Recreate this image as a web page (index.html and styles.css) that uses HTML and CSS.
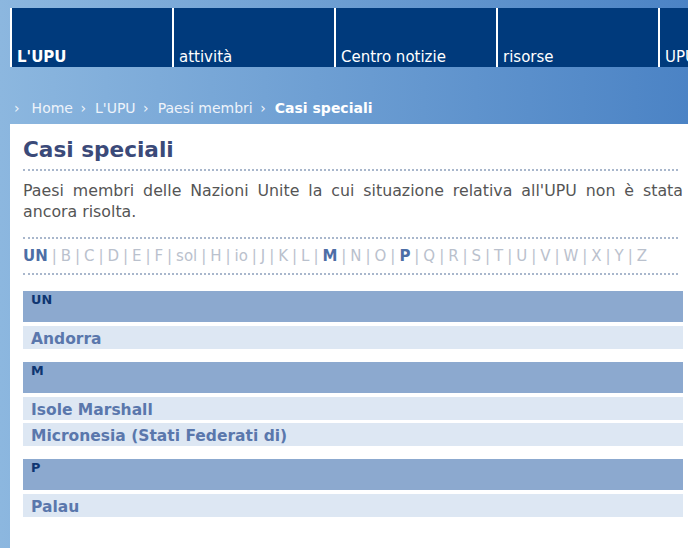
FILE: index.html
```html
<!DOCTYPE html>
<html lang="it">
<head>
  <meta charset="UTF-8">
  <title>Casi speciali</title>
  <link rel="stylesheet" href="styles.css">
</head>
<body>
  <ul class="topnav">
    <li><a href="#" class="current">L'UPU</a></li>
    <li><a href="#">attività</a></li>
    <li><a href="#">Centro notizie</a></li>
    <li><a href="#">risorse</a></li>
    <li><a href="#">UPU</a></li>
  </ul>

  <div class="crumbs">
    <span class="sep">›</span><a href="#">Home</a>
    <span class="sep">›</span><a href="#">L'UPU</a>
    <span class="sep">›</span><a href="#">Paesi membri</a>
    <span class="sep">›</span><strong>Casi speciali</strong>
  </div>

  <div class="content">
    <h1>Casi speciali</h1>
    <div class="intro">
      <p>Paesi membri delle Nazioni Unite la cui situazione relativa all'UPU non è stata ancora risolta.</p>
    </div>

    <div class="letters">
      <a href="#" class="on">UN</a> | B | C | D | E | F | sol | H | io | J | K | L | <a href="#" class="on">M</a> | N | O | <a href="#" class="on">P</a> | Q | R | S | T | U | V | W | X | Y | Z
    </div>

    <div class="group">
      <h2>UN</h2>
      <ul>
        <li>Andorra</li>
      </ul>
    </div>

    <div class="group">
      <h2>M</h2>
      <ul>
        <li>Isole Marshall</li>
        <li>Micronesia (Stati Federati di)</li>
      </ul>
    </div>

    <div class="group">
      <h2>P</h2>
      <ul>
        <li>Palau</li>
      </ul>
    </div>
  </div>
</body>
</html>
```

FILE: styles.css
```css
html, body { margin: 0; overflow: hidden; }
body { font-family: "DejaVu Sans", Verdana, sans-serif; background: linear-gradient(to right, #8cb7df, #4b83c5); height: 548px; }

.topnav { display: flex; margin: 0; padding: 8px 0 0 10px; list-style: none; white-space: nowrap; }
.topnav li { flex: 0 0 160px; height: 59px; border-left: 2px solid #fff; background: #003a7c; display: flex; align-items: flex-end; overflow: hidden; }
.topnav a { color: #fff; text-decoration: none; font-size: 15px; line-height: 17px; padding: 0 0 1px 5px; }
.topnav a.current { font-weight: bold; }

.crumbs { padding: 32px 0 7px 14px; font-size: 14px; line-height: 18px; color: #eef3fa; white-space: nowrap; }
.crumbs a { color: #eef3fa; text-decoration: none; }
.crumbs strong { color: #fff; }
.crumbs .sep { margin: 0 9px 0 3px; }
.crumbs .sep:first-child { margin: 0 12px 0 0; }

.content { background: #fff; margin-left: 10px; padding: 13px 5px 0 13px; height: 424px; }

.content h1 { margin: 0 5px 0 0; padding-bottom: 6px; font-size: 21.6px; line-height: 26px; color: #3b4a79; border-bottom: 2px dotted #a9b7cc; }

.intro { margin-right: 5px; padding: 9px 0 15px; border-bottom: 2px dotted #a9b7cc; }
.intro p { margin: 0 -5px 0 0; font-size: 15.8px; line-height: 21px; color: #555; text-align: justify; }

.letters { margin-right: 5px; padding: 7px 0; font-size: 15px; line-height: 20px; word-spacing: -0.8px; color: #bac1cd; white-space: nowrap; border-bottom: 2px dotted #a9b7cc; }
.letters a { color: #4d6ea6; font-weight: bold; text-decoration: none; }

.group { display: flex; flex-direction: column; gap: 4px; margin-top: 16px; }
.group + .group { margin-top: 13px; }
.group h2 { margin: 0; height: 31px; box-sizing: border-box; padding: 1px 0 0 8px; font-size: 12.8px; line-height: 15px; color: #0e3571; background: #8ca9cf; }
.group ul { display: flex; flex-direction: column; gap: 3px; margin: 0; padding: 0; list-style: none; }
.group li { height: 23px; box-sizing: border-box; padding: 3px 0 0 8px; font-size: 15.5px; font-weight: bold; line-height: 20px; color: #5a77ac; background: #dde7f3; }
```
